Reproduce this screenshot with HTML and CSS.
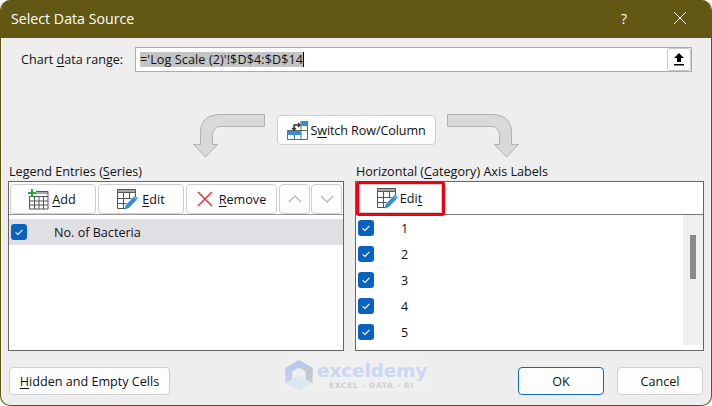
FILE: index.html
```html
<!DOCTYPE html>
<html lang="en">
<head>
<meta charset="utf-8">
<title>Select Data Source</title>
<link rel="stylesheet" href="styles.css">
</head>
<body>
<svg width="0" height="0" class="defs">
  <defs>
    <symbol id="check" viewBox="0 0 16 16"><rect width="16" height="16" rx="3" fill="#0a62c0"/><path d="M4.600 8.300 7 10.400 11.400 5.800" fill="none" stroke="#fff" stroke-width="1.100"/></symbol>
    <symbol id="edit" viewBox="0 0 22 21">
      <path d="M.5.5h18v3H.5z" fill="#a8a8a8" stroke="#555"/>
      <path d="M.5 3.500h18v6M.5 3.500v16h9M6.500 3.500v16M12.500 3.500v6M.5 9.500h14M.5 14.500h9" fill="none" stroke="#555"/>
      <path d="M7.500 20.500l1.400-4.600L18 6.600l3 3-9.200 9.300z" fill="#2f8fdc"/>
      <path d="M17 7.600l3 3" stroke="#bfe0f7" stroke-width="1"/>
    </symbol>
  </defs>
</svg>
<main class="dialog">
  <header class="titlebar">
    <h1 class="title">Select Data Source</h1>
    <span class="help">?</span>
    <svg class="close" width="14" height="14" viewBox="0 0 14 14"><path d="M1 1l12 12M13 1L1 13" stroke="#fff" stroke-width="1"/></svg>
  </header>
  <div class="content">
    <div class="range-row">
      <label class="range-label">Chart <u>d</u>ata range:</label>
      <div class="range-input">
        <span class="range-text">='Log Scale (2)'!$D$4:$D$14</span>
        <span class="caret"></span>
        <button class="collapse" type="button" aria-label="Collapse">
          <svg width="10" height="13" viewBox="0 0 10 13"><path d="M5 0l5 5H7v4H3V5H0z" fill="#000"/><path d="M0 11h10v1.500H0z" fill="#000"/></svg>
        </button>
      </div>
    </div>

    <div class="switch-row">
      <svg class="arrow" width="72" height="44" viewBox="0 0 72 44"><path d="M71.500 .5H27C14 .5 7.500 7 7.500 19v11.500H.5L12.500 43l12-12.500h-5V22c0-6 3-9.500 9-9.500h43z" fill="#d9d9d9" stroke="#b0b0b0"/></svg>
      <button class="btn btn-switch" type="button">
        <svg width="21" height="20" viewBox="0 0 21 20"><path d="M.5 10.500h20v9H.5zM7.500 6v13.500M14 1v18.500M20.500 1v10" fill="none" stroke="#666"/><path d="M14 1h6.500v5H14zM.5 11H14v4H.5z" fill="#2f8fdc"/><path d="M7 10V5h6M5 8l2 2 2-2M11 3l2 2-2 2" fill="none" stroke="#333" stroke-width="1.300"/></svg>
        <span class="switch-text">S<u>w</u>itch Row/Column</span>
      </button>
      <svg class="arrow" width="72" height="44" viewBox="0 0 72 44"><path d="M.5 .5H45C58 .5 64.500 7 64.500 19v11.500h7L59.500 43l-12-12.500h5V22c0-6-3-9.500-9-9.500H.5z" fill="#d9d9d9" stroke="#b0b0b0"/></svg>
    </div>

    <div class="panels">
      <section class="panel panel-left">
        <h2 class="panel-title">Legend Entries (<u>S</u>eries)</h2>
        <div class="box">
          <div class="toolbar">
            <button class="btn tool tool-wide tool-add" type="button">
              <svg width="21" height="21" viewBox="0 0 21 21"><path d="M8 2.500h12V5H8z" fill="#a8a8a8"/><path d="M1.500 7.500h18.500v12.500H1.500zM1.500 12h18.500M1.500 16h18.500M6.500 7.500V20M11 7.500V20M15.500 7.500V20M8 2.500h12v5" fill="none" stroke="#555"/><path d="M4 0v8M0 4h8" stroke="#28a745" stroke-width="2"/></svg>
              <span><u>A</u>dd</span>
            </button>
            <button class="btn tool tool-wide" type="button">
              <svg width="22" height="21"><use href="#edit"/></svg>
              <span><u>E</u>dit</span>
            </button>
            <button class="btn tool tool-remove" type="button">
              <svg width="16" height="16" viewBox="0 0 16 16"><path d="M1 1l14 14M15 1L1 15" stroke="#e8323c" stroke-width="1.500"/></svg>
              <span><u>R</u>emove</span>
            </button>
            <button class="btn tool tool-icon" type="button" aria-label="Up">
              <svg width="14" height="8" viewBox="0 0 14 8"><path d="M1 7l6-6 6 6" fill="none" stroke="#b8b8b8" stroke-width="1.300"/></svg>
            </button>
            <button class="btn tool tool-icon" type="button" aria-label="Down">
              <svg width="14" height="8" viewBox="0 0 14 8"><path d="M1 1l6 6 6-6" fill="none" stroke="#b8b8b8" stroke-width="1.300"/></svg>
            </button>
          </div>
          <div class="list list-left">
            <div class="row row-selected">
              <svg class="check" width="16" height="16"><use href="#check"/></svg>
              <span class="row-text">No. of Bacteria</span>
            </div>
          </div>
        </div>
      </section>

      <section class="panel panel-right">
        <h2 class="panel-title">Horizontal (<u>C</u>ategory) Axis Labels</h2>
        <div class="box">
          <div class="toolbar toolbar-right">
            <button class="btn tool tool-marked" type="button">
              <svg width="22" height="21"><use href="#edit"/></svg>
              <span>Edi<u>t</u></span>
            </button>
          </div>
          <div class="axis-body">
            <div class="list list-right">
              <div class="row axis-row"><svg class="check" width="16" height="16"><use href="#check"/></svg><span class="axis-text">1</span></div>
              <div class="row axis-row"><svg class="check" width="16" height="16"><use href="#check"/></svg><span class="axis-text">2</span></div>
              <div class="row axis-row"><svg class="check" width="16" height="16"><use href="#check"/></svg><span class="axis-text">3</span></div>
              <div class="row axis-row"><svg class="check" width="16" height="16"><use href="#check"/></svg><span class="axis-text">4</span></div>
              <div class="row axis-row"><svg class="check" width="16" height="16"><use href="#check"/></svg><span class="axis-text">5</span></div>
            </div>
            <div class="scrollbar"><div class="thumb"></div></div>
          </div>
        </div>
      </section>
    </div>

    <footer class="footer">
      <button class="btn btn-hidden" type="button"><u>H</u>idden and Empty Cells</button>
      <div class="watermark">
        <svg width="28" height="31" viewBox="0 0 28 32"><path d="M14 0l14 8v8l-14-8-14 8V8z" fill="#bcc8ee"/><path d="M0 8l14 8v0L0 24z" fill="#bfcdf3"/><path d="M28 8v16l-14-8V8z" fill="#c3c9d2"/><path d="M0 24l14-8 14 8-14 8z" fill="#dde8ee"/><path d="M14 8l7 4v8l-7-4-7 4v-8z" fill="#eeeeee"/></svg>
        <div class="wm-text">
          <span class="wm-name">exceldemy</span>
          <span class="wm-sub">EXCEL - DATA - BI</span>
        </div>
      </div>
      <button class="btn btn-action btn-ok" type="button">OK</button>
      <button class="btn btn-action" type="button">Cancel</button>
    </footer>
  </div>
</main>
</body>
</html>
```

FILE: styles.css
```css
* { box-sizing: border-box; }

html, body {
  margin: 0;
  padding: 0;
  width: 712px;
  height: 406px;
  overflow: hidden;
  background: #fff;
}

.defs { display: block; height: 0; }

u { text-underline-offset: 2px; }

.dialog {
  width: 712px;
  height: 406px;
  display: flex;
  flex-direction: column;
  background: #eeeeee;
  border: 1px solid #625813;
  border-top: 0;
  border-radius: 10px;
  overflow: hidden;
  font-family: "Open Sans", "Noto Sans", sans-serif;
  font-size: 12.600px;
  color: #111;
}

.titlebar {
  height: 38px;
  flex: none;
  display: flex;
  align-items: center;
  background: #625813;
  color: #fff;
  padding: 0 24px 2px 10px;
}

.title {
  margin: 0;
  flex: 1;
  font-size: 14.200px;
  font-weight: 400;
}

.help { font-size: 14px; margin-right: 46px; }

.content {
  flex: 1;
  display: flex;
  flex-direction: column;
  padding: 9px 7px 10px 7px;
}

.range-row {
  display: flex;
  align-items: center;
  height: 25px;
  padding-left: 13px;
  padding-right: 12px;
}

.range-label { width: 114px; flex: none; }

.range-input {
  flex: 1;
  height: 25px;
  display: flex;
  align-items: center;
  background: #fff;
  border: 1px solid #aaaaaa;
  padding-left: 4px;
}

.range-text {
  background: #c4c4c4;
  line-height: 15px;
  letter-spacing: .1px;
  white-space: nowrap;
}

.caret { width: 1px; height: 15px; background: #000; }

.collapse {
  margin-left: auto;
  width: 24px;
  height: 23px;
  padding: 0;
  display: flex;
  align-items: center;
  justify-content: center;
  background: #fff;
  border: 1px solid #c8c8c8;
  border-radius: 3px;
}

.btn {
  font: inherit;
  color: inherit;
  background: #fdfdfd;
  border: 1px solid #cfcfcf;
  border-radius: 4px;
  padding: 0;
  display: flex;
  align-items: center;
  justify-content: center;
  white-space: nowrap;
}

.switch-row {
  display: flex;
  align-items: flex-start;
  justify-content: center;
  gap: 11px;
  margin-top: 42px;
  height: 44px;
}

.arrow { flex: none; }

.btn-switch {
  width: 159px;
  height: 30px;
  gap: 2px;
  margin-top: 1px;
  margin-left: 1px;
}

.switch-text { letter-spacing: -.1px; }

.panels {
  display: flex;
  gap: 11px;
  margin-top: 5px;
}

.panel-left { width: 336px; }
.panel-right { width: 349px; }

.panel-title {
  margin: 0;
  height: 18px;
  line-height: 18px;
  font-size: 12.600px;
  font-weight: 400;
  padding-left: 1px;
}

.box {
  height: 170px;
  background: #fff;
  border: 1px solid #666666;
  display: flex;
  flex-direction: column;
}

.toolbar {
  height: 33px;
  flex: none;
  display: flex;
  align-items: flex-start;
  gap: 2px;
  padding: 2px 1px 0;
  border-bottom: 1px solid #9a9a9a;
}

.tool { height: 30px; gap: 3px; flex: none; }
.tool-wide { width: 86px; }
.tool-add { padding-right: 2px; }
.tool-remove { width: 91px; gap: 6px; }
.tool-icon { width: 31px; margin-right: -1px; }

.toolbar-right {
  padding: 0;
  border-bottom-color: #777;
}

.tool-marked {
  width: 89px;
  height: 35px;
  border: 3px solid #f0000f;
  border-radius: 3px;
  margin-top: -1px;
  padding-right: 2px;
  gap: 1px;
  box-shadow: inset 0 0 0 1px #cfcfcf;
}

.list-left { padding-top: 4px; }

.row {
  display: flex;
  align-items: center;
  height: 26px;
}

.row-selected { background: #e0e0e4; padding-left: 2px; }

.check { flex: none; }

.row-text { margin-left: 27px; }

.axis-body {
  flex: 1;
  display: flex;
  min-height: 0;
}

.list-right { flex: 1; }

.axis-row { padding-left: 2px; }

.axis-text { margin-left: 27px; }

.scrollbar {
  width: 20px;
  height: 130px;
  background: #f0f0f0;
  padding: 20px 0 0 7px;
}

.thumb {
  width: 6px;
  height: 44px;
  background: #8a8a8a;
}

.footer {
  flex: 1;
  display: flex;
  align-items: flex-start;
  padding-top: 16px;
  padding-left: 1px;
  padding-right: 1px;
}

.btn-hidden {
  width: 161px;
  height: 28px;
}

.watermark {
  display: flex;
  gap: 4px;
  align-items: center;
  margin-left: 115px;
  margin-top: -8px;
  margin-right: auto;
  width: 143px;
  height: 32px;
  background: #f0f0f0;
}

.wm-text {
  display: flex;
  flex-direction: column;
}

.wm-name {
  font-family: "DejaVu Sans", sans-serif;
  font-weight: 700;
  font-size: 18.300px;
  color: #c9d6f4;
  line-height: 20px;
}

.wm-sub {
  font-family: "DejaVu Sans", sans-serif;
  font-size: 7.500px;
  line-height: 9px;
  font-weight: 700;
  letter-spacing: .7px;
  color: #cfcfcf;
  padding-left: 12px;
  white-space: nowrap;
}

.btn-action {
  width: 86px;
  height: 28px;
  margin-left: 13px;
}

.btn-ok {
  margin-left: 0;
  border-color: #0a6cc0;
}
```
